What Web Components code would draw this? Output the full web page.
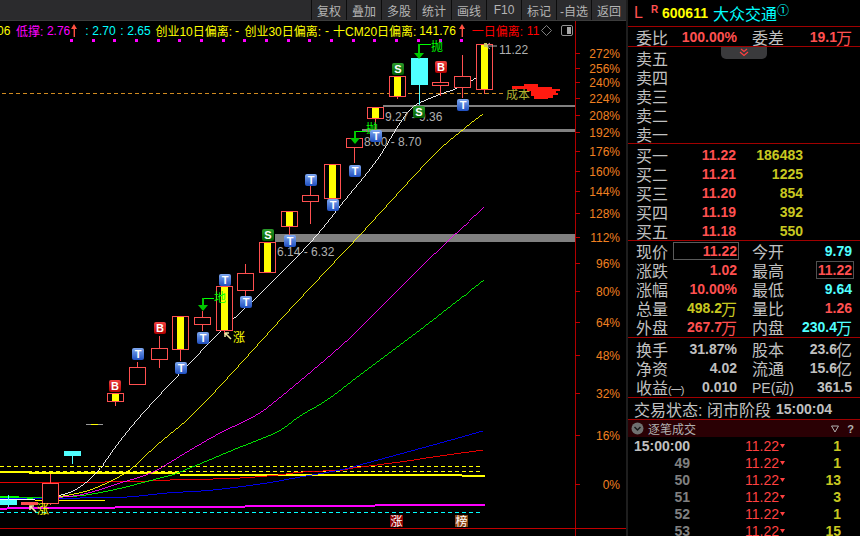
<!DOCTYPE html>
<html lang="zh">
<head>
<meta charset="utf-8">
<title>600611</title>
<style>
    html, body { margin: 0; height: 100%; background: #000; overflow: hidden; }
    body { font-family: "Liberation Sans", "Noto Sans CJK SC", sans-serif; }
</style>
</head>
<body>
<quote-app>
    <tool-bar slot="toolbar">
        <tool-btn>复权</tool-btn><tool-btn>叠加</tool-btn><tool-btn>多股</tool-btn><tool-btn>统计</tool-btn><tool-btn>画线</tool-btn><tool-btn>F10</tool-btn><tool-btn>标记</tool-btn><tool-btn>-自选</tool-btn><tool-btn>返回</tool-btn>
    </tool-bar>
    <kline-chart slot="chart">
        <chart-legend></chart-legend>
    </kline-chart>
    <quote-panel slot="panel">
        <stock-title></stock-title>
        <panel-section>
            <stat-row a="委比" av="100.00%" ac="red" b="委差" bv="19.1" bc="red" bu="万"></stat-row>
        </panel-section>
        <panel-section pad="1 0">
            <expand-tab></expand-tab>
            <book-row label="卖五"></book-row>
            <book-row label="卖四"></book-row>
            <book-row label="卖三"></book-row>
            <book-row label="卖二"></book-row>
            <book-row label="卖一"></book-row>
        </panel-section>
        <panel-section pad="1 0">
            <book-row label="买一" price="11.22" vol="186483"></book-row>
            <book-row label="买二" price="11.21" vol="1225"></book-row>
            <book-row label="买三" price="11.20" vol="854"></book-row>
            <book-row label="买四" price="11.19" vol="392"></book-row>
            <book-row label="买五" price="11.18" vol="550"></book-row>
        </panel-section>
        <panel-section pad="0 1">
            <stat-row a="现价" av="11.22" ac="red" abox b="今开" bv="9.79" bc="cyan"></stat-row>
            <stat-row a="涨跌" av="1.02" ac="red" b="最高" bv="11.22" bc="red" bbox></stat-row>
            <stat-row a="涨幅" av="10.00%" ac="red" b="最低" bv="9.64" bc="cyan"></stat-row>
            <stat-row a="总量" av="498.2" ac="olive" au="万" b="量比" bv="1.26" bc="red"></stat-row>
            <stat-row a="外盘" av="267.7" ac="red" au="万" b="内盘" bv="230.4" bc="cyan" bu="万"></stat-row>
        </panel-section>
        <panel-section pad="1 1">
            <stat-row a="换手" av="31.87%" b="股本" bv="23.6" bu="亿"></stat-row>
            <stat-row a="净资" av="4.02" b="流通" bv="15.6" bu="亿"></stat-row>
            <stat-row a="收益" as="(一)" av="0.010" b="PE(动)" bfs="14" bv="361.5"></stat-row>
        </panel-section>
        <trade-status></trade-status>
        <tick-list></tick-list>
    </quote-panel>
</quote-app>

<script>
class QuoteApp extends HTMLElement {
    constructor() {
        super();
        this.attachShadow({ mode: 'open' });
        this.shadowRoot.innerHTML = `
            <style>
                :host { display: flex; width: 860px; height: 536px; overflow: hidden; background: #000; }
                .left { width: 626px; display: flex; flex-direction: column; }
                .divider { width: 2px; background: #1e1e1e; }
                .right { width: 232px; }
            </style>
            <div class="left">
                <slot name="toolbar"></slot>
                <slot name="chart"></slot>
            </div>
            <div class="divider"></div>
            <div class="right"><slot name="panel"></slot></div>
        `;
    }
}

class ToolBar extends HTMLElement {
    constructor() {
        super();
        this.attachShadow({ mode: 'open' });
        this.shadowRoot.innerHTML = `
            <style>
                :host {
                    display: flex;
                    justify-content: flex-end;
                    height: 20px;
                    background: #2b2b2d;
                    border-bottom: 1px solid #3c3c3c;
                }
            </style>
            <slot></slot>
        `;
    }
}

class ToolBtn extends HTMLElement {
    constructor() {
        super();
        this.attachShadow({ mode: 'open' });
        this.shadowRoot.innerHTML = `
            <style>
                :host {
                    display: flex;
                    align-items: center;
                    justify-content: center;
                    width: 34px;
                    border-left: 1px solid #0c0c0c;
                    color: #b4b4b4;
                    font-size: 12px;
                    white-space: nowrap;
                }
            </style>
            <slot></slot>
        `;
    }
}

class ChartLegend extends HTMLElement {
    constructor() {
        super();
        this.attachShadow({ mode: 'open' });
        const arrow = m => `<svg class="ar" style="margin-left:${m}px" width="6" height="13" viewBox="0 0 6 13"><path d="M3 0 L6 5 H4 V13 H2.600 V5 H0 Z" fill="#ff5040"/></svg>`;
        this.shadowRoot.innerHTML = `
            <style>
                :host {
                    position: absolute;
                    top: 0;
                    left: 0;
                    width: 574px;
                    display: flex;
                    align-items: center;
                    height: 19px;
                    font-size: 12px;
                    white-space: nowrap;
                    overflow: hidden;
                    color: #ffff00;
                }
                span { flex: none; }
                svg { flex: none; }
                .m { color: #ff00ff; }
                .c { color: #00ffff; }
                .r { color: #ff0000; }
            </style>
            <span style="margin-left:-3px">06</span>
            <span class="m" style="margin-left:5.700px">低撑:</span>
            <span class="m" style="margin-left:3.500px">2.76</span>
            ${arrow(1)}
            <span class="c" style="margin-left:8px">:</span>
            <span class="c" style="margin-left:3.700px">2.70</span>
            <span class="c" style="margin-left:4.700px">:</span>
            <span class="c" style="margin-left:3.700px">2.65</span>
            <span style="margin-left:4.700px">创业10日偏离:</span>
            <span style="margin-left:3px">-</span>
            <span style="margin-left:5.300px">创业30日偏离:</span>
            <span style="margin-left:4px">-</span>
            <span style="margin-left:4px">十CM20日偏离:</span>
            <span style="margin-left:2.700px">141.76</span>
            ${arrow(3)}
            <span class="r" style="margin-left:7px">一日偏离:</span>
            <span class="r" style="margin-left:3.700px">11</span>
            <svg style="margin-left:2px" width="11" height="11" viewBox="0 0 11 11"><path d="M5.500 .5 L10.500 5.500 L5.500 10.500 L.5 5.500 Z" fill="none" stroke="#808080"/></svg>
            <svg style="margin-left:9px" width="12" height="11" viewBox="0 0 12 11"><rect x=".5" y=".5" width="11" height="10" rx="1.500" fill="none" stroke="#909090"/><rect x="6" y="2" width="4" height="7" fill="#a8a8a8"/></svg>
        `;
    }
}

class KlineChart extends HTMLElement {
    constructor() {
        super();
        this.attachShadow({ mode: 'open' });
        this.shadowRoot.innerHTML = `
            <style>
                :host { display: block; position: relative; width: 626px; height: 515px; }
                svg { display: block; font-family: "Liberation Sans", "Noto Sans CJK SC", sans-serif; font-size: 12px; }
                .crisp { shape-rendering: crispEdges; }
            </style>
            <svg width="626" height="515" viewBox="0 21 626 515">${this.draw()}</svg>
            <slot></slot>
        `;
    }

    draw() {
        const RED = '#ff5050';
        let s = '<defs>' +
            this.gloss('gT', '#7fa8f0', '#1f4fc0') +
            this.gloss('gB', '#f04040', '#b00000') +
            this.gloss('gS', '#2a9a2a', '#005c00') +
            '</defs><g class="crisp">';

        // magenta markers under the legend
        [71, 93, 114, 136, 158, 179, 201, 223, 244, 266, 288, 309, 331, 353, 374, 396, 418, 440, 461]
            .forEach(x => { s += `<rect x="${x - 1}" y="39" width="3" height="3" fill="#ff00ff"/>`; });

        // axis
        s += `<rect x="575" y="21" width="1" height="515" fill="#b00000"/>`;
        s += `<rect x="0" y="528" width="626" height="1" fill="#c00000"/>`;

        // support bars
        s += `<rect x="275" y="234" width="300" height="8" fill="#808080"/>`;
        s += `<rect x="383" y="105" width="192" height="2" fill="#808080"/>`;
        s += `<rect x="362" y="129" width="213" height="3" fill="#808080"/>`;

        // dashed levels
        s += `<path d="M2 93.500H505" stroke="#d08a20" stroke-dasharray="4 3" fill="none"/>`;
        s += `<path d="M0 466.500H482M0 471.500H482" stroke="#ffff00" stroke-dasharray="4 3" fill="none"/>`;
        s += `<path d="M0 512.500H482" stroke="#00ffff" stroke-dasharray="4 3" fill="none"/>`;

        // step lines
        s += this.steps('#ffff00', [[0, 29, 471], [29, 180, 472], [180, 462, 474], [462, 485, 475]]);
        s += this.steps('#ff00ff', [[0, 7, 508], [7, 115, 507], [115, 245, 506], [245, 375, 505], [375, 485, 504]]);

        // averages
        s += this.line('#ff0000', '0,482 105,482 148,481 170,480 213,479 240,478 255,477 278,475 303,472 343,470 353,468 400,462 433,457 483,450');
        s += this.line('#0000ff', '0,498 80,498 127,497 167,493 213,490 267,483 300,477 340,470 367,463 433,445 483,431');
        s += this.line('#00ff00', '0,497 33,498 77,496 113,490 160,478 180,472 233,450 277,432 300,416 327,400 360,375 420,330 484,280');
        s += this.line('#ff00ff', '40,498 80,495 120,483 153,472 187,452 220,433 253,417 277,400 333,353 360,328 420,268 484,207');
        s += this.line('#ffff00', '57,497 90,490 127,472 157,445 187,420 207,400 233,372 283,317 327,270 360,235 431,158 465,128 483,114');
        s += this.line('#ffffff', '53,497 75,490 97,472 123,437 155,400 220,332 257,297 310,243 345,200 377,160 400,123 413,107 433,97 462,86 482,74');

        s += `<rect x="0" y="496" width="19" height="2" fill="#00ff00"/><rect x="19" y="497" width="38" height="1" fill="#00d000"/>
              <rect x="0" y="498" width="17" height="1" fill="#0000ff"/>
              <rect x="0" y="499" width="35" height="1" fill="#ffffff"/><rect x="35" y="500" width="70" height="1" fill="#ffff00"/>`;

        // candles: left, body top, body bottom, wick top, wick bottom, kind
        const candles = [
            [0, 500, 504, 495, 506, 'c'],
            [21, 502, 504, 502, 506, 'f'],
            [42, 483, 503, 474, 504, 'h'],
            [64, 451, 455, 451, 463, 'c'],
            [107, 393, 401, 393, 405, 'y'],
            [129, 367, 384, 362, 384, 'h'],
            [151, 348, 359, 336, 367, 'h'],
            [172, 316, 349, 316, 360, 'y'],
            [194, 317, 324, 311, 330, 'h'],
            [216, 286, 330, 286, 333, 'y'],
            [237, 273, 290, 264, 295, 'h'],
            [259, 242, 272, 242, 272, 'y'],
            [281, 211, 226, 211, 234, 'y'],
            [302, 195, 201, 174, 223, 'h'],
            [324, 164, 198, 164, 198, 'y'],
            [346, 138, 147, 138, 162, 'h'],
            [367, 107, 118, 107, 130, 'y'],
            [389, 76, 96, 76, 98, 'y'],
            [411, 58, 84, 58, 104, 'c'],
            [432, 82, 85, 73, 95, 'h'],
            [454, 76, 87, 55, 97, 'h'],
            [476, 44, 89, 44, 93, 'y']
        ];
        candles.forEach(c => { s += this.candle(c, RED); });
        s += `<rect x="86" y="424" width="17" height="1" fill="#9a9a9a"/><rect x="91" y="424" width="7" height="1" fill="#ffff00"/>`;
        s += '</g>';

        // price notes sit under the badges
        [[277, 256, '6.14 - 6.32'], [385, 121, '9.27 - 9.36'], [364, 146, '8.00 - 8.70'], [499, 54, '11.22']]
            .forEach(t => { s += `<text x="${t[0]}" y="${t[1]}" fill="#b0b0b0">${t[2]}</text>`; });
        s += `<path d="M486 46 H497 M486 46 l4 -3 M486 46 l4 3" stroke="#b0b0b0" fill="none"/><rect x="484" y="43" width="3" height="4" fill="#c8c860"/>`;

        // green hooks
        s += this.hook(203, 298, 305, 214);
        s += this.hook(355, 131, 138, 366);
        s += this.hook(419, 44, 53, 431);
        s += `<text x="214" y="302" fill="#00ff00">地</text>`;
        s += `<text x="366" y="133" fill="#00ff00">抛</text>`;
        s += `<text x="431" y="51" fill="#00ff00">抛</text>`;

        // badges
        [[115, 386, 'B'], [138, 354, 'T'], [160, 328, 'B'], [181, 368, 'T'], [203, 338, 'T'], [225, 280, 'T'],
         [246, 302, 'T'], [268, 235, 'S'], [290, 241, 'T'], [311, 180, 'T'], [333, 205, 'T'], [355, 171, 'T'],
         [376, 136, 'T'], [398, 69, 'S'], [419, 112, 'S'], [441, 67, 'B'], [463, 105, 'T']]
            .forEach(b => { s += this.badge(b[0], b[1], b[2]); });

        // rise notes
        s += `<path d="M225 333 l6 6 M225 333 h4 M225 333 v4" stroke="#f0e8a0" stroke-width="1.500" fill="none"/>`;
        s += `<text x="233" y="342" fill="#ffff00">涨</text>`;
        s += `<path d="M30 506 l6 6 M30 506 h4 M30 506 v4" stroke="#f0e8a0" stroke-width="1.500" fill="none"/>`;
        s += `<text x="37" y="514" fill="#ffff00">涨</text>`;

        // cost marker
        s += `<text x="506" y="99" fill="#b0b030">成本</text>`;
        s += `<path class="crisp" d="M512 86 H524 V84 H538 V87 H552 V89 H560 V91 H556 V93 H558 V95 H553 V98 H548 V99 H534 V96 H531 V91 H527 V89 H512 Z" fill="#ff1a10"/>`;

        // bottom tags
        s += this.tag(390, '#8b0000', '涨');
        s += this.tag(455, '#8b4513', '榜');

        // axis ticks and labels
        [[272, 53], [256, 68], [240, 82], [224, 98], [208, 115], [192, 132], [176, 151], [160, 171], [144, 191],
         [128, 213], [112, 237], [96, 263], [80, 291], [64, 322], [48, 355], [32, 393], [16, 435], [0, 484]]
            .forEach(a => {
                s += `<rect class="crisp" x="575" y="${a[1]}" width="5" height="1" fill="#c00000"/>`;
                s += `<text x="620" y="${a[1] + 5}" text-anchor="end" fill="#f08020">${a[0]}%</text>`;
            });
        return s;
    }

    gloss(id, a, b) {
        return `<linearGradient id="${id}" x1="0" y1="0" x2="0" y2="1"><stop offset="0" stop-color="${a}"/><stop offset="1" stop-color="${b}"/></linearGradient>`;
    }

    // catmull-rom through the read-off points, so the averages bend instead of kinking
    line(color, pts) {
        const p = pts.split(' ').map(q => q.split(',').map(Number));
        let d = `M${p[0][0]} ${p[0][1]}`;
        for (let i = 0; i < p.length - 1; i++) {
            const a = p[i - 1] || p[i], b = p[i], c = p[i + 1], e = p[i + 2] || c;
            const c1x = b[0] + (c[0] - a[0]) / 6, c1y = b[1] + (c[1] - a[1]) / 6;
            const c2x = c[0] - (e[0] - b[0]) / 6, c2y = c[1] - (e[1] - b[1]) / 6;
            d += `C${c1x.toFixed(1)} ${c1y.toFixed(1)} ${c2x.toFixed(1)} ${c2y.toFixed(1)} ${c[0]} ${c[1]}`;
        }
        return `<path d="${d}" fill="none" stroke="${color}" stroke-width=".9"/>`;
    }

    steps(color, parts) {
        return parts.map(p => `<rect x="${p[0]}" y="${p[2]}" width="${p[1] - p[0]}" height="2" fill="${color}"/>`).join('');
    }

    candle(c, red) {
        const [x, top, bot, wt, wb, kind] = c;
        const mid = x + 8;
        const w = kind === 'c' ? '#50ffff' : red;
        let s = `<rect x="${mid}" y="${wt}" width="1" height="${wb - wt + 1}" fill="${w}"/>`;
        if (kind === 'c') {
            s += `<rect x="${x}" y="${top}" width="17" height="${bot - top + 1}" fill="#50ffff"/>`;
        } else if (kind === 'f') {
            s += `<rect x="${x}" y="${top}" width="17" height="${bot - top + 1}" fill="${red}"/>`;
        } else {
            s += `<rect x="${x + .5}" y="${top + .5}" width="16" height="${bot - top}" fill="#000" stroke="${red}"/>`;
            if (kind === 'y') s += `<rect x="${x + 5}" y="${top + 1}" width="7" height="${bot - top - 1}" fill="#ffff00"/>`;
        }
        return s;
    }

    hook(x, top, tip, end) {
        return `<g class="crisp"><rect x="${x}" y="${top}" width="${end - x}" height="1" fill="#00ff00"/>
            <rect x="${x - 1}" y="${top}" width="2" height="${tip - top}" fill="#00c800"/></g>
            <path d="M${x - 5} ${tip} H${x + 5} L${x} ${tip + 6} Z" fill="#00c800"/>`;
    }

    badge(cx, cy, ch) {
        return `<rect x="${cx - 6}" y="${cy - 6}" width="12" height="12" rx="2" fill="url(#g${ch})"/>
            <text x="${cx}" y="${cy + 4}" text-anchor="middle" fill="#fff" font-size="11" font-weight="700">${ch}</text>`;
    }

    tag(x, bg, ch) {
        return `<rect x="${x}" y="515" width="13" height="12" fill="${bg}"/>
            <text x="${x + .5}" y="526" fill="#fff">${ch}</text>`;
    }
}

const PANEL_COLORS = `
    .red { color: #ff5050; }
    .cyan { color: #50ffff; }
    .olive { color: #c8c820; }
    .grey { color: #c0c0c0; }
`;

class QuotePanel extends HTMLElement {
    constructor() {
        super();
        this.attachShadow({ mode: 'open' });
        this.shadowRoot.innerHTML = `
            <style>
                :host { display: block; height: 536px; overflow: hidden; color: #c0c0c0; }
            </style>
            <slot></slot>
        `;
    }
}

class StockTitle extends HTMLElement {
    constructor() {
        super();
        this.attachShadow({ mode: 'open' });
        this.shadowRoot.innerHTML = `
            <style>
                :host {
                    display: flex;
                    align-items: center;
                    height: 26px;
                    border-bottom: 1px solid #a00000;
                    white-space: nowrap;
                }
                .l { color: #ff5050; font-size: 16px; margin-left: 6px; width: 17px; }
                .r { color: #ff5050; font-size: 10px; font-weight: 700; width: 11px; margin-top: -8px; }
                .code { color: #ffff00; font-size: 14px; font-weight: 700; width: 51px; }
                .name { color: #00ffff; font-size: 16px; }
                .mark { color: #00ffff; font-size: 12px; margin-top: -8px; }
            </style>
            <span class="l">L</span>
            <span class="r">R</span>
            <span class="code">600611</span>
            <span class="name">大众交通</span>
            <span class="mark">①</span>
        `;
    }
}

class PanelSection extends HTMLElement {
    constructor() {
        super();
        this.attachShadow({ mode: 'open' });
        const [t, b] = (this.getAttribute('pad') || '0 0').split(' ');
        this.shadowRoot.innerHTML = `
            <style>
                :host {
                    display: block;
                    position: relative;
                    padding: ${t}px 0 ${b}px;
                    border-bottom: 1px solid #a00000;
                }
            </style>
            <slot></slot>
        `;
    }
}

class ExpandTab extends HTMLElement {
    constructor() {
        super();
        this.attachShadow({ mode: 'open' });
        this.shadowRoot.innerHTML = `
            <style>
                :host {
                    position: absolute;
                    top: 0;
                    left: 93px;
                    width: 46px;
                    height: 12px;
                    display: flex;
                    justify-content: center;
                    background: #3a3a3c;
                    border-radius: 0 0 5px 5px;
                }
            </style>
            <svg width="10" height="10" viewBox="0 0 10 10"><path d="M2 2 L5 4.500 L8 2 M1 5 L5 8.500 L9 5" fill="none" stroke="#ff4040" stroke-width="1.200"/></svg>
        `;
    }
}

class BookRow extends HTMLElement {
    constructor() {
        super();
        this.attachShadow({ mode: 'open' });
        const price = this.getAttribute('price') || '';
        const vol = this.getAttribute('vol') || '';
        this.shadowRoot.innerHTML = `
            <style>
                :host {
                    display: grid;
                    grid-template-columns: 32px 68px 67px;
                    grid-template-rows: 19px;
                    align-items: center;
                    padding-left: 8px;
                    white-space: nowrap;
                }
                .label { font-size: 16px; color: #c0c0c0; }
                .num { font-size: 14px; font-weight: 700; text-align: right; }
                ${PANEL_COLORS}
            </style>
            <span class="label">${this.getAttribute('label')}</span>
            <span class="num red">${price}</span>
            <span class="num olive">${vol}</span>
        `;
    }
}

class StatRow extends HTMLElement {
    constructor() {
        super();
        this.attachShadow({ mode: 'open' });
        this.shadowRoot.innerHTML = `
            <style>
                :host {
                    display: flex;
                    height: 19px;
                    padding-left: 8px;
                    gap: 15px;
                    white-space: nowrap;
                }
                .half { display: flex; align-items: center; justify-content: space-between; width: 101px; position: relative; }
                .half.b { width: 100px; }
                .label { font-size: 16px; color: #c0c0c0; }
                .label small { font-size: 11px; letter-spacing: -1px; }
                .val { font-size: 14px; font-weight: 700; display: flex; align-items: center; color: #c0c0c0; }
                .val i { font-style: normal; font-weight: 400; font-size: 16px; margin-left: -1px; }
                .box { position: absolute; top: 1px; bottom: 0; right: -2px; border: 1px solid #5a5a5a; }
                .box.wide { width: 64px; }
                .box.narrow { width: 36px; border-color: #505050; }
                ${PANEL_COLORS}
            </style>
            <div class="half">${this.side('a', 'wide')}</div>
            <div class="half b">${this.side('b', 'narrow')}</div>
        `;
    }

    side(k, boxClass) {
        const unit = this.getAttribute(k + 'u');
        const suffix = this.getAttribute(k + 's');
        const fs = this.getAttribute(k + 'fs');
        const box = this.hasAttribute(k + 'box') ? `<div class="box ${boxClass}"></div>` : '';
        return `<span class="label"${fs ? ` style="font-size:${fs}px"` : ''}>${this.getAttribute(k)}${suffix ? `<small>${suffix}</small>` : ''}</span>
            <span class="val ${this.getAttribute(k + 'c') || ''}">${this.getAttribute(k + 'v')}${unit ? `<i>${unit}</i>` : ''}</span>${box}`;
    }
}

class TradeStatus extends HTMLElement {
    constructor() {
        super();
        this.attachShadow({ mode: 'open' });
        this.shadowRoot.innerHTML = `
            <style>
                :host {
                    display: flex;
                    align-items: center;
                    height: 21px;
                    padding-left: 6px;
                    border-bottom: 1px solid #a00000;
                    font-size: 16px;
                    color: #c0c0c0;
                    white-space: nowrap;
                }
                b { font-size: 14px; margin-left: 5px; }
            </style>
            交易状态: 闭市阶段<b>15:00:04</b>
        `;
    }
}

class TickList extends HTMLElement {
    constructor() {
        super();
        this.attachShadow({ mode: 'open' });
        const ticks = [['15:00:00', '1'], ['49', '1'], ['50', '13'], ['51', '3'], ['52', '1'], ['53', '15']];
        this.shadowRoot.innerHTML = `
            <style>
                :host { display: block; font-size: 14px; white-space: nowrap; }
                .head {
                    display: flex;
                    align-items: center;
                    height: 17px;
                    background: #2a0004;
                    font-size: 12px;
                    color: #b0b0b0;
                }
                .head .dot { margin: 0 4px 0 3px; flex: none; }
                .head .grow { flex: 1; }
                .head svg.f { margin-right: 8px; }
                .head .q { margin-right: 6px; font-weight: 700; font-size: 11px; }
                .row {
                    display: grid;
                    grid-template-columns: 56px 55px 41px 55px;
                    grid-template-rows: 17px;
                    align-items: center;
                    padding-left: 6px;
                }
                .t { font-weight: 700; text-align: right; color: #808080; }
                .row.first .t { color: #c0c0c0; }
                .p { color: #ff4040; display: flex; align-items: center; gap: 1px; }
                .v { font-weight: 700; color: #c8c820; text-align: right; }
            </style>
            <div class="head">
                <svg class="dot" width="13" height="13" viewBox="0 0 13 13"><circle cx="6.500" cy="6.500" r="6" fill="#707070"/><path d="M3.500 5 L6.500 8 L9.500 5" fill="none" stroke="#1a1a1a" stroke-width="1.500"/></svg>
                <span>逐笔成交</span>
                <span class="grow"></span>
                <svg class="f" width="8" height="8" viewBox="0 0 8 8"><path d="M.5 1 H7.500 L4 7 Z" fill="none" stroke="#b0b0b0"/></svg>
                <span class="q">?</span>
            </div>
            ${ticks.map((t, i) => `
                <div class="row ${i === 0 ? 'first' : ''}">
                    <span class="t">${t[0]}</span>
                    <span></span>
                    <span class="p">11.22<svg width="5" height="4" viewBox="0 0 5 4"><path d="M0 0 H5 L2.500 4 Z" fill="#ff4040"/></svg></span>
                    <span class="v">${t[1]}</span>
                </div>`).join('')}
        `;
    }
}

customElements.define('quote-app', QuoteApp);
customElements.define('tool-bar', ToolBar);
customElements.define('tool-btn', ToolBtn);
customElements.define('chart-legend', ChartLegend);
customElements.define('kline-chart', KlineChart);
customElements.define('quote-panel', QuotePanel);
customElements.define('stock-title', StockTitle);
customElements.define('panel-section', PanelSection);
customElements.define('expand-tab', ExpandTab);
customElements.define('book-row', BookRow);
customElements.define('stat-row', StatRow);
customElements.define('trade-status', TradeStatus);
customElements.define('tick-list', TickList);
</script>
</body>
</html>
